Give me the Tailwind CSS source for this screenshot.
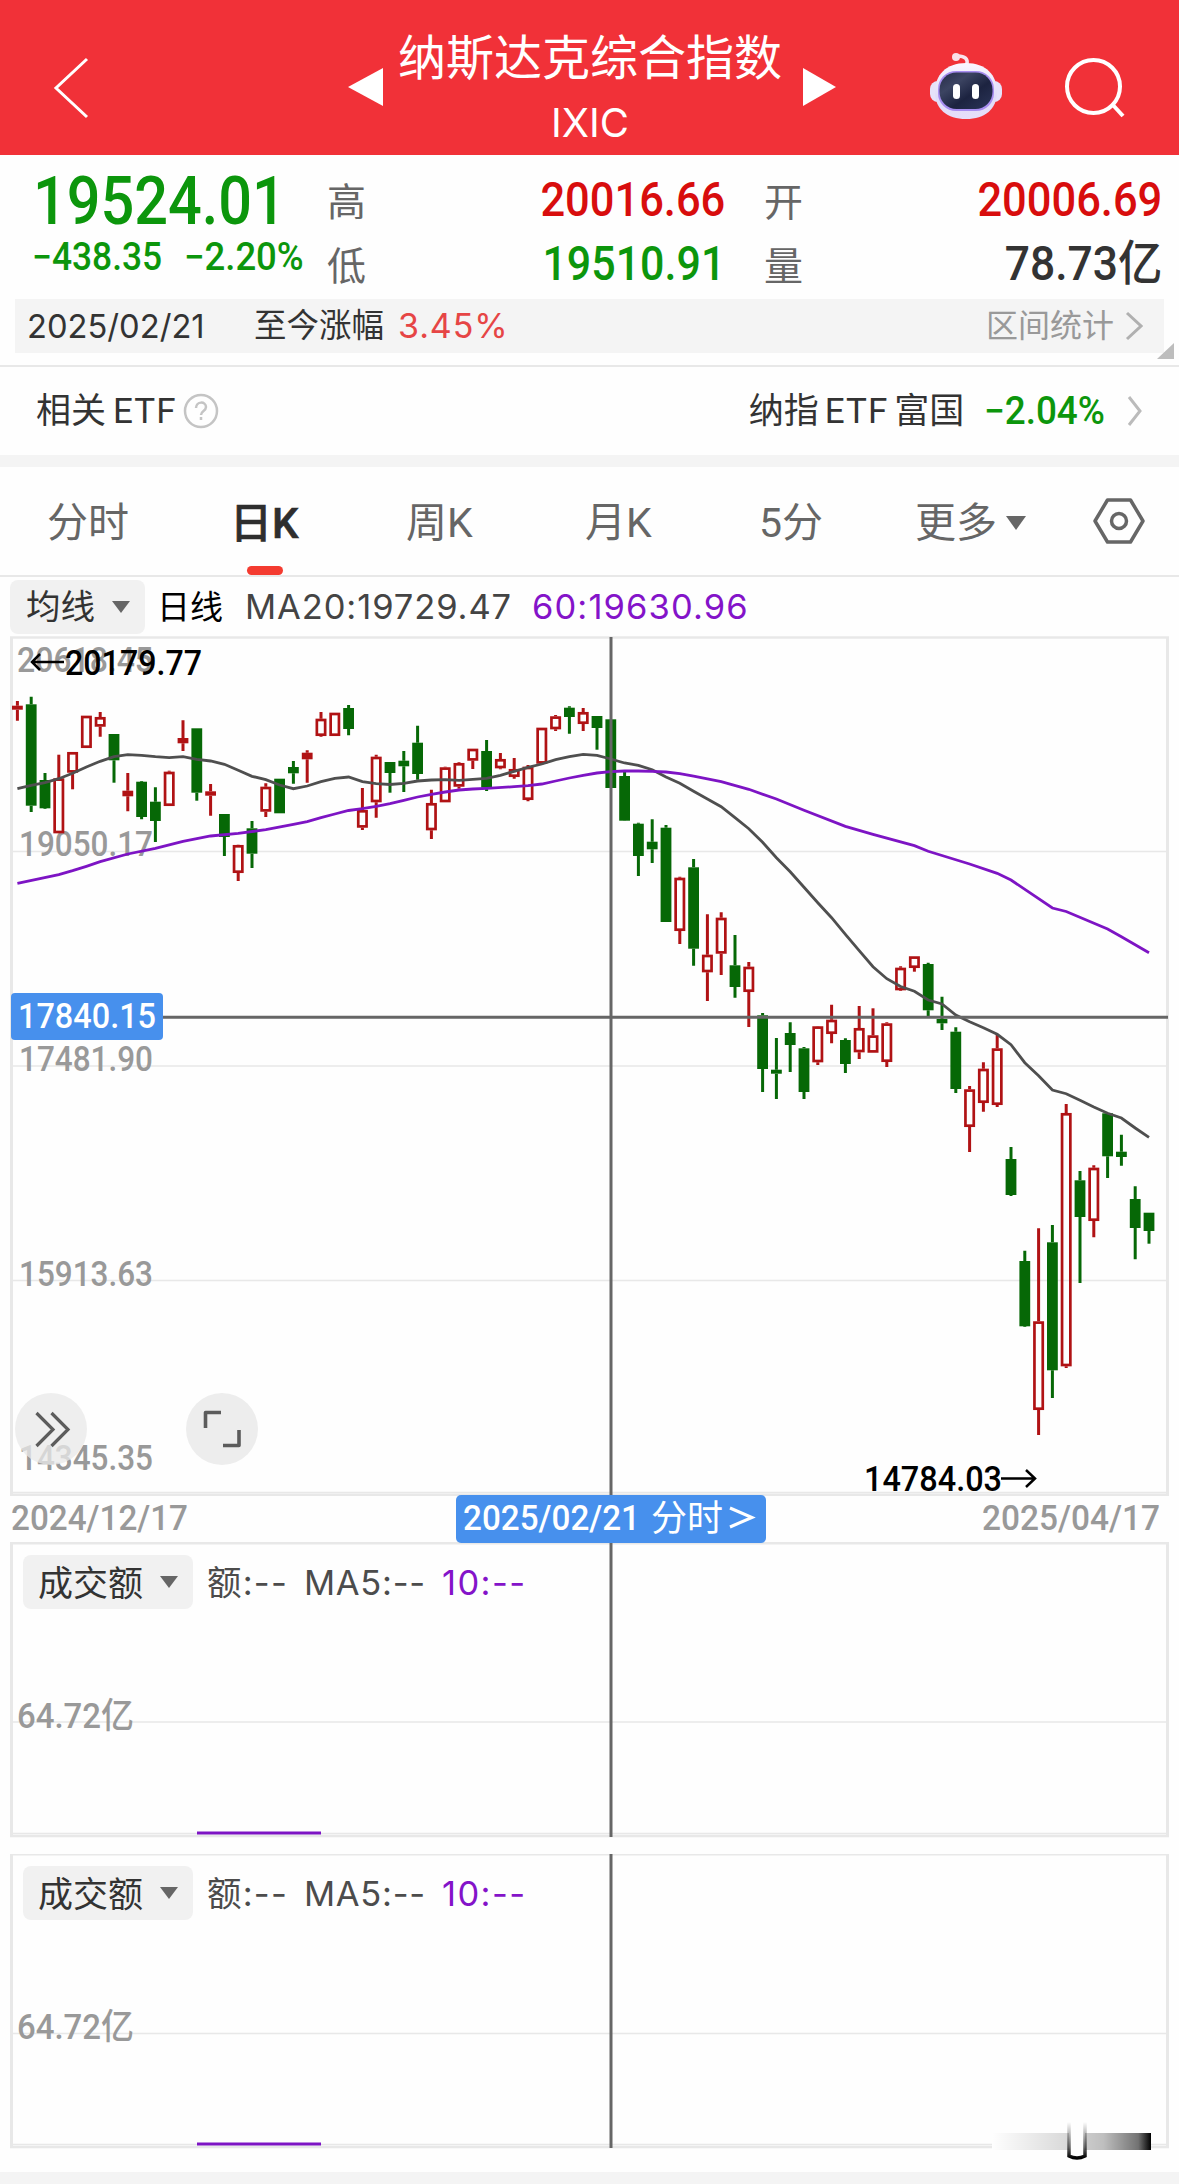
<!DOCTYPE html>
<html lang="zh-CN">
<head>
<meta charset="utf-8">
<title>纳斯达克综合指数 IXIC</title>
<script src="https://cdn.jsdelivr.net/npm/@tailwindcss/browser@4"></script>
</head>
<body class="bg-white">
<main class="w-[1179px] h-[2184px] overflow-hidden flex flex-col bg-[#fefefe] leading-none text-[#333] font-[Roboto,'Noto_Sans_CJK_SC',sans-serif]">

  <!-- title bar -->
  <header class="h-[155px] shrink-0 bg-[#f13138] text-white flex items-start">
    <svg class="w-[348px] h-[155px] shrink-0" viewBox="0 0 348 155" fill="none" stroke="#fff" stroke-width="3"><path d="M87 59L56 88l31 29"/></svg>
    <svg class="w-[35px] h-[155px] shrink-0" viewBox="0 0 35 155"><path d="M0 87L35 68v38z" fill="#fff"/></svg>
    <div class="w-[414px] shrink-0 flex flex-col items-center pt-[35px]">
      <h1 class="text-[48px] font-normal">纳斯达克综合指数</h1>
      <p class="text-[40px] mt-[20px] font-[Inter]">IXIC</p>
    </div>
    <svg class="w-[40px] h-[155px] shrink-0" viewBox="-6 0 40 155"><path d="M0 68l33 19-33 19z" fill="#fff"/></svg>
    <svg class="w-[342px] h-[155px] shrink-0" viewBox="837 0 342 155" fill="none">
      <defs>
        <linearGradient id="face" x1="0" y1="0" x2="1" y2="1"><stop offset="0" stop-color="#262c48"/><stop offset=".3" stop-color="#3c4462"/><stop offset=".6" stop-color="#1c2340"/><stop offset="1" stop-color="#2b3558"/></linearGradient>
        <linearGradient id="head" x1="0" y1="0" x2="0" y2="1"><stop offset="0" stop-color="#fbf6ff"/><stop offset=".6" stop-color="#e0dcf8"/><stop offset="1" stop-color="#e6defa"/></linearGradient>
      </defs>
      <path d="M967 64c1-5-2-8-9-8" stroke="#f9e4ee" stroke-width="3.500"/><circle cx="956" cy="57" r="4" fill="#f9dfe8"/>
      <rect x="930" y="81" width="72" height="21" rx="8" fill="#e6e2fa"/>
      <path d="M966 63c20 0 31 12 31 29 0 17-12 27-31 27s-31-10-31-27c0-17 11-29 31-29z" fill="url(#head)"/>
      <rect x="938" y="71" width="56" height="40" rx="18" fill="#a78df0"/>
      <rect x="939.500" y="72.500" width="53" height="36.500" rx="17" fill="url(#face)"/>
      <rect x="953" y="84" width="7" height="15" rx="3.500" fill="#fff"/><rect x="972" y="84" width="7" height="15" rx="3.500" fill="#fff"/>
      <circle cx="1093.500" cy="86.500" r="26.500" stroke="#fff" stroke-width="4"/><path d="M1112.500 104.500l10.500 11.500" stroke="#fff" stroke-width="4"/>
    </svg>
  </header>

  <!-- quote -->
  <section class="h-[144px] shrink-0 flex">
    <div class="w-[327px] pl-[33px] pt-[14px] shrink-0 text-[#0c960c] font-medium">
      <div class="text-[66px] origin-left scale-x-[.9]">19524.01</div>
      <div class="flex text-[38px] mt-[3px] -ml-px"><span class="w-[152px]"><span class="inline-block origin-left scale-x-[.93]">−438.35</span></span><span class="inline-block origin-left scale-x-[.96]">−2.20%</span></div>
    </div>
    <div class="w-[398px] pt-[21px] shrink-0 flex flex-col gap-[16px] text-[48px]">
      <div class="flex justify-between items-center"><span class="text-[39px] text-[#666] pt-[6px]">高</span><span class="font-medium text-[#d80d0d] origin-right scale-x-[.905]">20016.66</span></div>
      <div class="flex justify-between items-center"><span class="text-[39px] text-[#666] pt-[6px]">低</span><span class="font-medium text-[#0c960c] origin-right scale-x-[.895]">19510.91</span></div>
    </div>
    <div class="w-[398px] ml-[39px] pt-[21px] shrink-0 flex flex-col gap-[16px] text-[48px]">
      <div class="flex justify-between items-center"><span class="text-[39px] text-[#666] pt-[6px]">开</span><span class="font-medium text-[#d80d0d] origin-right scale-x-[.905]">20006.69</span></div>
      <div class="flex justify-between items-center"><span class="text-[39px] text-[#666] pt-[6px]">量</span><span class="font-medium origin-right scale-x-[.925]">78.73亿</span></div>
    </div>
  </section>

  <section class="h-[66px] shrink-0 px-[15px] relative">
    <div class="h-[54px] bg-[#f4f4f4] flex items-center pl-[12px] pr-[21px] text-[34px]">
      <span class="w-[227px] font-[Inter] text-[33px]"><span class="inline-block origin-left scale-x-[.99]">2025/02/21</span></span>
      <span class="w-[144px] text-[32.500px]">至今涨幅</span>
      <span class="text-[#e64545] text-[34px] font-[Inter] tracking-[0.900px]">3.45%</span>
      <span class="ml-auto text-[32px] text-[#999]">区间统计</span>
      <svg class="w-[18px] h-[30px] ml-[11px]" viewBox="0 0 18 30" fill="none" stroke="#b0b0b0" stroke-width="3"><path d="M2 2l14 13L2 28"/></svg>
    </div>
    <svg class="absolute right-[5px] bottom-[6px] w-[17px] h-[16px]" viewBox="0 0 17 16"><path d="M17 0v16H0z" fill="#bdbdbd"/></svg>
  </section>

  <!-- related ETF -->
  <section class="h-[90px] shrink-0 border-t-2 border-[#e8e8e8] flex items-center pl-[36px] pr-[36px] text-[35px]">
    <span>相关</span><span class="ml-[7px] tracking-[1px]">ETF</span>
    <svg class="w-[36px] h-[36px] ml-[7px]" viewBox="0 0 36 36" fill="none" stroke="#c4c4c4" stroke-width="2.500"><circle cx="18" cy="18" r="16"/><path d="M13 15c0-7 10-7 10-1 0 4-5 4-5 8M18 24v3"/></svg>
    <span class="ml-auto">纳指</span><span class="mx-[6px] tracking-[1px]">ETF</span><span>富国</span>
    <span class="font-medium text-[#0c960c] text-[38px] ml-[20px] origin-left scale-x-[.97]">−2.04%</span>
    <svg class="w-[16px] h-[30px] ml-[18px]" viewBox="0 0 16 30" fill="none" stroke="#bbb" stroke-width="3"><path d="M2 1l11 14L2 29"/></svg>
  </section>
  <div class="h-[12px] shrink-0 bg-[#f4f4f4]"></div>

  <!-- period tabs -->
  <nav class="h-[110px] shrink-0 border-b-2 border-[#e8e8e8] flex items-start text-[41px] text-[#666] pl-[47px]">
    <div class="w-[183px] pt-[36px]">分时</div>
    <div class="w-[176px] pt-[36px] font-medium text-[#2e2e2e] flex flex-col relative"><span class="text-[42px] [-webkit-text-stroke:0.600px_#2e2e2e]">日K</span><i class="absolute left-[17px] top-[99px] w-[36px] h-[9px] rounded-full bg-[#f43b30]"></i></div>
    <div class="w-[179px] pt-[36px]">周K</div>
    <div class="w-[174px] pt-[36px]">月K</div>
    <div class="w-[156px] pt-[36px]">5分</div>
    <div class="w-[178px] pt-[36px] flex items-center">更多<svg class="w-[20px] h-[14px] ml-[9px] mb-[2px]" viewBox="0 0 20 14"><path d="M0 0h20L10 14z" fill="#666"/></svg></div>
    <svg class="w-[52px] h-[46px] mt-[31px]" viewBox="0 0 52 46" fill="none" stroke="#666" stroke-width="3.500"><path d="M14.500 2h23L50 23 37.500 44h-23L2 23z" stroke-linejoin="round"/><circle cx="26" cy="23" r="7.500"/></svg>
  </nav>

  <div class="h-[59px] shrink-0 flex items-center pl-[10px] text-[34.500px] text-[#444]">
    <span class="w-[135px] h-[54px] rounded-lg bg-[#f1f1f1] text-[#333] text-[34.500px] flex items-center pl-[16px] pt-px">均线<svg class="w-[18px] h-[12px] ml-[17px]" viewBox="0 0 18 12"><path d="M0 0h18L9 12z" fill="#666"/></svg></span>
    <span class="text-black text-[33px] ml-[12px] w-[88px] pt-[2px]">日线</span>
    <span class="w-[287px] pt-px font-[Inter] tracking-[0.900px]">MA20:19729.47</span>
    <span class="text-[#8413c9] pt-px font-[Inter] tracking-[1.100px]">60:19630.96</span>
  </div>

  <!-- candlestick chart with date axis -->
  <svg id="kline" class="w-[1179px] h-[907px] shrink-0 block" viewBox="0 636 1179 907" fill="none">
    <g stroke="#e8e8e8">
      <path d="M10 637.500H1169" stroke-width="2.500"/><path d="M11.500 637V1495M1167.500 637V1495" stroke-width="3"/>
      <path d="M13 851.500H1166M13 1066H1166M13 1280.500H1166M13 1492.500H1166" stroke-width="1.500"/><path d="M10 1494.800H1169" stroke-width="2.500"/>
      <path d="M10 1542.500H1169" stroke-width="1"/>
    </g>
    <g fill="#999" font-size="35" font-weight="500">
      <text x="17" y="672" textLength="136" lengthAdjust="spacingAndGlyphs">20618.45</text>
      <text x="19" y="856" textLength="134" lengthAdjust="spacingAndGlyphs">19050.17</text>
      <text x="19" y="1071" textLength="134" lengthAdjust="spacingAndGlyphs">17481.90</text>
      <text x="19" y="1286" textLength="134" lengthAdjust="spacingAndGlyphs">15913.63</text>
      <text x="19" y="1470" textLength="134" lengthAdjust="spacingAndGlyphs">14345.35</text>
      <text x="11" y="1530" textLength="177" lengthAdjust="spacingAndGlyphs">2024/12/17</text>
      <text x="982" y="1530" textLength="178" lengthAdjust="spacingAndGlyphs">2025/04/17</text>
    </g>
    <g id="candles"></g>
    <path id="ma20" stroke="#4f4f4f" stroke-width="2.800"/>
    <path id="ma60" stroke="#7d14c4" stroke-width="2.800"/>
    <g fill="#000" font-size="35" font-weight="500">
      <text x="65" y="675" textLength="137" lengthAdjust="spacingAndGlyphs">20179.77</text>
      <text x="864" y="1491" textLength="138" lengthAdjust="spacingAndGlyphs">14784.03</text>
    </g>
    <path d="M64 662H32M40 654l-8 8 8 8M1001 1478.500h34M1026 1470l9 8.500-9 8.500" stroke="#000" stroke-width="2.500"/>
    <path d="M611 637V1543M163 1017.200H1168" stroke="#666" stroke-width="3"/>
    <rect x="11" y="993" width="152" height="47" rx="4" fill="#4790ed"/>
    <rect x="456" y="1495" width="310" height="48" rx="5" fill="#4790ed"/>
    <g fill="#fff" font-size="35" font-weight="500">
      <text x="18" y="1028" textLength="138" lengthAdjust="spacingAndGlyphs">17840.15</text>
      <text x="463" y="1530" textLength="177" lengthAdjust="spacingAndGlyphs">2025/02/21</text>
      <text x="651" y="1531" font-size="36" font-weight="400">分时</text>
    </g>
    <path d="M730 1508l22 9.500-22 9.500" stroke="#fff" stroke-width="3"/>
    <g fill="#e9e9e9" fill-opacity=".76"><circle cx="51" cy="1429" r="36"/></g><circle cx="222" cy="1429" r="36" fill="#ededed"/>
    <path d="M36.500 1413l16.500 16.500-16.500 16.500M51.500 1413l16.500 16.500-16.500 16.500" stroke="#5c5c5c" stroke-width="3.200"/>
    <path d="M205.500 1428v-15.500H221M239 1430v15.500h-16" stroke="#5c5c5c" stroke-width="3.600" stroke-linejoin="round"/>
  </svg>

  <!-- turnover panels -->
  <section class="h-[311px] shrink-0 relative">
    <svg class="absolute inset-0 w-[1179px] h-[311px]" viewBox="0 1543 1179 311" fill="none">
      <g stroke="#e8e8e8"><path d="M10 1543.500H1169" stroke-width="2"/><path d="M11.500 1543V1837M1167.500 1543V1837" stroke-width="3"/><path d="M13 1722H1166M13 1833.500H1166" stroke-width="1.500"/><path d="M10 1836H1169" stroke-width="2.500"/></g>
      <text x="17" y="1728" fill="#999" font-size="35" font-weight="500" textLength="117" lengthAdjust="spacingAndGlyphs">64.72亿</text>
      <path d="M197 1833H321" stroke="#7d14c4" stroke-width="3"/><path d="M611 1543V1837" stroke="#666" stroke-width="3"/>
    </svg>
    <div class="relative flex items-center pt-[12px] pl-[23px] text-[34.500px] text-[#4c4c4c] font-[Inter,'Noto_Sans_CJK_SC',sans-serif]">
      <span class="w-[170px] h-[54px] rounded-lg bg-[#f1f1f1] text-[#333] text-[35px] flex items-center pl-[15px] pt-[2px]">成交额<svg class="w-[18px] h-[12px] ml-[17px] mb-[2px]" viewBox="0 0 18 12"><path d="M0 0h18L9 12z" fill="#666"/></svg></span>
      <span class="ml-[14px] w-[97px] pt-[2px] tracking-[1.200px]">额:--</span><span class="w-[138px] pt-[2px] tracking-[0.700px]">MA5:--</span><span class="text-[#8413c9] pt-[2px] tracking-[1.400px]">10:--</span>
    </div>
  </section>
  <section class="h-[318px] shrink-0 relative">
    <svg class="absolute inset-0 w-[1179px] h-[318px]" viewBox="0 1543 1179 318" fill="none">
      <defs>
        <linearGradient id="smear"><stop offset="0" stop-color="#000" stop-opacity="0"/><stop offset=".45" stop-color="#000" stop-opacity=".14"/><stop offset=".7" stop-color="#000" stop-opacity=".25"/><stop offset=".92" stop-color="#000" stop-opacity=".55"/><stop offset="1" stop-color="#000"/></linearGradient>
        <linearGradient id="hook" x1="0" y1="0" x2="0" y2="1"><stop offset="0" stop-color="#000" stop-opacity="0"/><stop offset=".7" stop-color="#000" stop-opacity=".6"/><stop offset="1" stop-color="#000"/></linearGradient>
      </defs>
      <g stroke="#e8e8e8"><path d="M10 1543.500H1169" stroke-width="2"/><path d="M11.500 1543V1837M1167.500 1543V1837" stroke-width="3"/><path d="M13 1722.500H1166M13 1833.500H1166" stroke-width="1.500"/><path d="M10 1836H1169" stroke-width="2.500"/></g>
      <text x="17" y="1728" fill="#999" font-size="35" font-weight="500" textLength="117" lengthAdjust="spacingAndGlyphs">64.72亿</text>
      <path d="M197 1833H321" stroke="#7d14c4" stroke-width="3"/><path d="M611 1543V1837" stroke="#666" stroke-width="3"/>
      <rect x="992" y="1822" width="159" height="17" fill="#fefefe"/>
      <rect x="992" y="1822" width="159" height="17" fill="url(#smear)"/>
      <path d="M1069 1811v34q8 4 16 0v-34" fill="#fefefe"/>
      <path d="M1069 1811v34q8 4 16 0v-34" stroke="url(#hook)" stroke-width="3.500"/>
    </svg>
    <div class="relative flex items-center pt-[12px] pl-[23px] text-[34.500px] text-[#4c4c4c] font-[Inter,'Noto_Sans_CJK_SC',sans-serif]">
      <span class="w-[170px] h-[54px] rounded-lg bg-[#f1f1f1] text-[#333] text-[35px] flex items-center pl-[15px] pt-[2px]">成交额<svg class="w-[18px] h-[12px] ml-[17px] mb-[2px]" viewBox="0 0 18 12"><path d="M0 0h18L9 12z" fill="#666"/></svg></span>
      <span class="ml-[14px] w-[97px] pt-[2px] tracking-[1.200px]">额:--</span><span class="w-[138px] pt-[2px] tracking-[0.700px]">MA5:--</span><span class="text-[#8413c9] pt-[2px] tracking-[1.400px]">10:--</span>
    </div>
  </section>
  <div class="h-[12px] shrink-0 bg-[#f4f4f4]"></div>
</main>
<script>
// each candle: direction, wick top, wick bottom, body top, body bottom (y in chart units)
const candles = `R 701 720.7 705.7 709.7|G 696.7 812 704.3 805.7|G 773 809 780 808.3|R 754.7 833 778.3 833.3|R 752 789.3 752 772.7|R 715.7 748 715.7 748|R 712 736.7 717 726.7|G 734 782.7 734 760.3|R 773 811.3 790.7 796.3|G 781 819.3 781.7 817|G 787.3 842 801.7 821|R 770.7 806 771.7 806|R 720.3 751 738 743.3|G 728.3 800.7 728.3 792.7|R 784 815.7 791.3 795.7|G 814 856 814 837|R 844.7 881 845 873|G 821 868 828.3 853.7|R 783.3 817 786.7 811.7|G 778.7 813.3 778.7 813.3|G 761 783.7 767 773.3|R 750.3 782.7 752.7 759.3|R 712 736.7 718.7 736|R 712.7 736 712.7 736|G 705 735.3 708 729|R 788 830 810 827.7|R 754.7 817.7 756.7 802.3|G 762 792.7 762 773|G 751 792 760.7 766.3|G 725.7 779.7 742.7 774|R 789.7 839 803 830.3|R 766.7 802.3 767.3 802.3|R 762.3 788.7 763 786.7|R 748.7 769 748.7 760.7|G 740 791 751 787.7|R 753 769.3 759 768.3|R 758 778.7 769 777|R 765 801.3 766.7 800|R 727.7 764.7 727.7 763.7|R 715 731 716.3 729.3|G 706.3 733.7 707.7 717|R 708 731 712 724|G 716 749.7 716 728|G 719.3 788 719.3 788|G 772 821 776 820.7|G 822.7 876 823.7 856|G 819.3 863 841.7 849.3|G 825 922 827.7 922|R 876.7 944 877.7 931|G 859 965.7 867.3 948.7|R 914.3 1001 954.7 972.3|R 912.3 975 917.7 953.7|G 935 997.7 965.3 987|R 962 1027 966.7 992|G 1013 1092 1015.3 1069|G 1038 1099 1069.7 1073.7|G 1022.3 1072 1033 1045|G 1047 1099 1048.3 1092|R 1026 1065 1026.3 1062.3|R 1004.7 1043.3 1019.7 1034|G 1038.3 1073 1040 1064|R 1006 1059 1028 1052.3|R 1008.3 1052.7 1035.3 1052.7|R 1022.3 1067 1023.3 1062|R 966.3 991 967.7 990.3|R 956.3 971.7 956.3 968|G 962.7 1016 964 1010.3|G 996.7 1030 1019 1023.3|G 1027.3 1093 1031.7 1089|R 1086 1152 1089.3 1127|R 1062.3 1111.7 1068.7 1103|R 1034.7 1107 1048.3 1105|G 1147 1196 1159 1195|G 1250.7 1327 1261 1326.3|R 1228.3 1435 1321.3 1410|G 1225 1398 1242.3 1370.3|R 1104 1368 1113 1366.3|G 1171 1283 1180.3 1217|R 1165.3 1237.3 1167.7 1221|G 1113.3 1178 1113.3 1156.3|G 1134.7 1165.7 1151.7 1157|G 1186.3 1259.3 1199 1228|G 1212.7 1243.7 1212.7 1231`.split('|').map(s => s.split(' '));
const ma20 = [788.7,785.3,782.7,778.7,773.3,767,761.3,756.7,754.7,755.3,756.7,757.7,756.7,759.3,761,764.3,770.3,776.3,779.7,785,788.7,786,781.7,778.3,777,781.7,783.7,784.5,783.3,781,780,779.7,780.3,779.3,778.3,775.3,771.3,767.3,764,759.7,756.7,754.3,755.3,759,763,765.3,769.7,777,783.2,791.3,799,806.7,817.7,828.7,842.3,857.7,871.7,887.3,902.7,917.7,934.3,950.7,966.7,978.7,986.5,991.3,1000,1004,1015,1021.7,1027.7,1034.3,1044.7,1062.7,1075.7,1090,1093.7,1100.3,1107,1113.3,1118,1128,1137.3];
const ma60 = [[0,883.3],[3,874.7],[4,870.7],[5,866.3],[6,861.7],[8,854],[10,848.3],[12,841.3],[14,836],[16,833.3],[18,829.7],[20,824.3],[21,821.7],[22,817.7],[23,814],[24,810.5],[25,808.7],[26,806.3],[27,803.7],[28,800.3],[29,797],[30,794.3],[31,792],[32,790],[33,789],[34,788.3],[36,786.7],[37,785.7],[38,784],[39,781],[40,778],[41,775.3],[42,773],[43,771.7],[44,771],[45,771],[46,771.3],[47,772],[48,773.7],[49,776.2],[51,781.7],[53,789.3],[55,799],[57,810.3],[60,826.3],[62,834.3],[65,845.7],[66,851.3],[69,864],[71,873.3],[72,880],[75,908],[76,911.5],[79,929],[80,936.7],[82,952.7]];
const x = i => 17.4 + i * 13.8;
document.getElementById('candles').innerHTML = candles.map(([d, h, l, t, b], i) => {
  [h, l, t, b] = [h, l, t, b].map(Number);
  const c = x(i), col = d === 'R' ? '#b01214' : '#066806';
  const wick = `M${c} ${h}V${t}M${c} ${b}V${Math.max(l, b)}`;
  const hollow = d === 'R' && b - t > 7;
  return `<path d="${wick}" stroke="${col}" stroke-width="3"/>` + (hollow
    ? `<rect x="${c - 4.15}" y="${t + 1.3}" width="8.3" height="${b - t - 2.6}" stroke="${col}" stroke-width="2.7"/>`
    : `<rect x="${c - 5.4}" y="${t}" width="10.8" height="${b - t}" fill="${col}"/>`);
}).join('');
const line = pts => 'M' + pts.map(([i, y]) => x(i).toFixed(1) + ' ' + y).join('L');
document.getElementById('ma20').setAttribute('d', line(ma20.map((y, i) => [i, y])));
document.getElementById('ma60').setAttribute('d', line(ma60));
</script>
</body>
</html>
